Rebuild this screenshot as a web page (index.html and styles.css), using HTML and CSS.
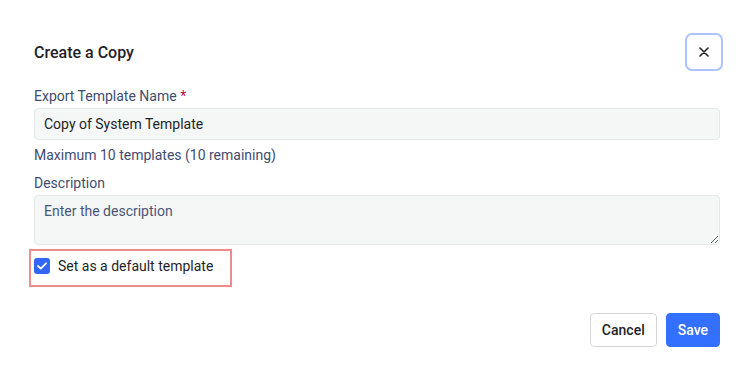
FILE: index.html
```html
<!DOCTYPE html>
<html>
<head>
  <meta charset="utf-8">
  <link rel="stylesheet" href="styles.css">
</head>
<body>
  <div class="dialog">
    <div class="dialog-header">
      <h2>Create a Copy</h2>
      <button class="close-btn" aria-label="Close">
        <svg width="10" height="10" viewBox="0 0 10 10"><path d="M1 1 L9 9 M9 1 L1 9" stroke="#1f2329" stroke-width="1.6" stroke-linecap="round"/></svg>
      </button>
    </div>

    <!-- template name -->
    <label class="field-label">Export Template Name <span class="required">*</span></label>
    <input class="text-input" type="text" value="Copy of System Template">
    <div class="helper-text">Maximum 10 templates (10 remaining)</div>

    <!-- description -->
    <label class="field-label field-label-gap">Description</label>
    <textarea class="text-area" placeholder="Enter the description"></textarea>

    <div class="checkbox-row">
      <span class="checkbox">
        <svg width="10" height="8" viewBox="0 0 10 8"><path d="M1 4 L3.8 6.6 L9 1.3" fill="none" stroke="white" stroke-width="1.8" stroke-linecap="round" stroke-linejoin="round"/></svg>
      </span>
      <span class="checkbox-label">Set as a default template</span>
    </div>

    <div class="dialog-footer">
      <button class="btn btn-outline">Cancel</button>
      <button class="btn btn-primary">Save</button>
    </div>
  </div>
</body>
</html>
```

FILE: styles.css
```css
body {
  margin: 0;
  padding: 0;
  font-family: Roboto, "Liberation Sans", sans-serif;
  font-size: 14px;
  background: white;
  color: #1f2329;
}

.dialog {
  padding: 33px 36px 0 34px;
}

.dialog-header {
  display: flex;
  align-items: center;
  justify-content: space-between;
  height: 38px;
  margin-bottom: 15px;
}

.dialog-header h2 {
  margin: 0;
  font-size: 16px;
  font-weight: 500;
  color: #1f2329;
}

.close-btn {
  width: 38px;
  height: 38px;
  margin-right: -3px;
  border: 2px solid #a9c4ff;
  border-radius: 7px;
  background: white;
  display: flex;
  align-items: center;
  justify-content: center;
  padding: 0;
  cursor: pointer;
}

.field-label {
  display: block;
  line-height: 20px;
  color: #3f4d6e;
  margin-bottom: 2px;
}

.field-label-gap {
  margin-top: 8px;
  margin-bottom: 2px;
}

.required {
  color: #b3123d;
}

.text-input {
  display: block;
  box-sizing: border-box;
  width: 100%;
  height: 32px;
  padding: 0 9px;
  border: 1px solid #e6e9e9;
  border-radius: 4px;
  background: #f5f7f7;
  font-family: inherit;
  font-size: 14px;
  color: #1f2329;
  outline: none;
}

.helper-text {
  line-height: 20px;
  margin-top: 5px;
  color: #3f4d6e;
}

.text-area {
  display: block;
  box-sizing: border-box;
  width: 100%;
  height: 50px;
  padding: 7px 9px;
  border: 1px solid #e6e9e9;
  border-radius: 4px;
  background: #f5f7f7;
  font-family: inherit;
  font-size: 14px;
  color: #1f2329;
  outline: none;
  resize: vertical;
}

.text-area::placeholder {
  color: #4a5675;
}

.checkbox-row {
  box-sizing: border-box;
  width: 203px;
  height: 38px;
  margin: 4px 0 0 -5px;
  padding-left: 3px;
  border: 2px solid #ef8b8b;
  display: flex;
  align-items: center;
  gap: 8px;
}

.checkbox {
  width: 16px;
  height: 16px;
  border-radius: 3px;
  background: #3366f6;
  display: flex;
  align-items: center;
  justify-content: center;
  margin-top: -4px;
}

.checkbox-label {
  color: #1f2329;
  margin-top: -4px;
}

.dialog-footer {
  display: flex;
  justify-content: flex-end;
  gap: 9px;
  margin-top: 26px;
}

.btn {
  height: 34px;
  padding: 0 11px;
  border-radius: 4px;
  font-family: inherit;
  font-size: 14px;
  font-weight: 500;
  cursor: pointer;
}

.btn-outline {
  background: white;
  border: 1px solid #d4d6dc;
  color: #1f2329;
}

.btn-primary {
  background: #3370ff;
  border: 1px solid #3370ff;
  color: white;
}
```
